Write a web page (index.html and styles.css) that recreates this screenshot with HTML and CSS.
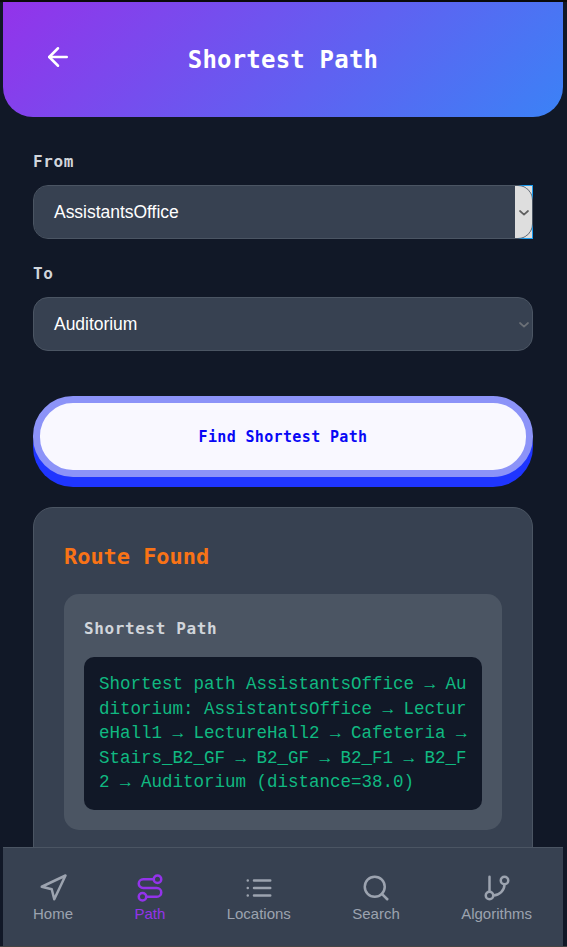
FILE: index.html
```html
<!DOCTYPE html>
<html lang="en">
<head>
<meta charset="utf-8">
<title>Shortest Path</title>
<link rel="stylesheet" href="styles.css">
</head>
<body>
<div class="app">
  <header class="header">
    <svg class="back" viewBox="0 0 24 24"><path d="m12 19-7-7 7-7"/><path d="M19 12H5"/></svg>
    <h1>Shortest Path</h1>
    <span class="header-spacer"></span>
  </header>
  <main class="content">
    <label class="label">From</label>
    <div class="select active">
      <span>AssistantsOffice</span>
      <span class="drop"><svg viewBox="0 0 10 6"><path d="M1 1l4 3.6L9 1"/></svg></span>
    </div>
    <label class="label">To</label>
    <div class="select">
      <span>Auditorium</span>
      <span class="drop"><svg viewBox="0 0 10 6"><path d="M1 1l4 3.6L9 1"/></svg></span>
    </div>
    <button class="find">Find Shortest Path</button>
    <section class="card">
      <h2>Route Found</h2>
      <div class="result">
        <h3>Shortest Path</h3>
        <div class="route">Shortest path AssistantsOffice → Auditorium: AssistantsOffice → LectureHall1 → LectureHall2 → Cafeteria → Stairs_B2_GF → B2_GF → B2_F1 → B2_F2 → Auditorium (distance=38.0)</div>
      </div>
    </section>
  </main>
  <nav class="nav">
    <a class="tab"><svg viewBox="0 0 24 24"><polygon points="3 11 22 2 13 21 11 13 3 11"/></svg>Home</a>
    <a class="tab current"><svg viewBox="0 0 24 24"><circle cx="6" cy="19" r="3"/><path d="M9 19h8.5a3.5 3.5 0 0 0 0-7h-11a3.5 3.5 0 0 1 0-7H15"/><circle cx="18" cy="5" r="3"/></svg>Path</a>
    <a class="tab"><svg viewBox="0 0 24 24"><path d="M8 6h13M8 12h13M8 18h13M3 6h.01M3 12h.01M3 18h.01"/></svg>Locations</a>
    <a class="tab"><svg viewBox="0 0 24 24"><circle cx="11" cy="11" r="8"/><path d="m21 21-4.3-4.3"/></svg>Search</a>
    <a class="tab"><svg viewBox="0 0 24 24"><path d="M6 3v12"/><circle cx="18" cy="6" r="3"/><circle cx="6" cy="18" r="3"/><path d="M18 9a9 9 0 0 1-9 9"/></svg>Algorithms</a>
  </nav>
</div>
</body>
</html>
```
FILE: styles.css
```css
*, *::after { box-sizing: border-box; }
body {
  margin: 0;
  height: 947px;
  overflow: hidden;
  background: #111827;
  border-top: 2px solid #0a0a0a;
  border-bottom: 1px solid #444444;
  font-family: "Liberation Sans", Arial, sans-serif;
}
svg { display: block; fill: none; stroke: currentColor; stroke-width: 2; stroke-linecap: round; stroke-linejoin: round; }
h1, h2, h3, .label, .find { font-family: "DejaVu Sans Mono", monospace; font-weight: 700; margin: 0; }
.app { width: 560px; height: 944px; margin-left: 3px; display: flex; flex-direction: column; }
.header {
  flex: none;
  height: 115px;
  padding: 0 40px;
  display: flex;
  align-items: center;
  justify-content: space-between;
  border-radius: 0 0 30px 30px;
  background: linear-gradient(135deg, #9333ea, #3b82f6);
  color: #fff;
}
.back { width: 30px; height: 30px; margin-bottom: 5px; }
.header-spacer { width: 30px; }
h1 { font-size: 24px; line-height: 30px; letter-spacing: 0.2px; }
.content { flex: 1; min-height: 0; overflow: hidden; padding: 34px 30px 0; }
.label { display: block; font-size: 16px; line-height: 22px; letter-spacing: 0.65px; color: #d1d5db; margin-bottom: 12px; }
.select {
  height: 54px;
  margin-bottom: 24px;
  padding-left: 20px;
  display: flex;
  align-items: center;
  justify-content: space-between;
  border: 1px solid #4b5563;
  border-radius: 15px;
  background: #374151;
  color: #fff;
  font-size: 17.5px;
  letter-spacing: -0.03px;
}
.drop { width: 17px; height: 52px; display: flex; align-items: center; justify-content: center; color: #6b7077; }
.drop svg { width: 10px; height: 6px; margin-top: 1px; stroke-width: 1.7; }
.active { background: linear-gradient(#374151, #374151) padding-box; position: relative; }
.active .drop { background: #dedede; color: #606060; border-radius: 0 14px 14px 0; }
.active::after {
  content: "";
  position: absolute;
  z-index: -1;
  top: -1px;
  right: -1px;
  width: 18px;
  height: 54px;
  background: #dedede;
  border: 1px solid #1b9cf0;
  border-left: 0;
}
.find {
  display: block;
  width: 100%;
  height: 81px;
  margin: 45px 0 30px;
  padding: 0;
  border: 7px solid #8c93f8;
  border-radius: 40px;
  background: #f9f8ff;
  box-shadow: 0 10px 0 #1f35ff;
  color: #0808f5;
  font-size: 15px;
  letter-spacing: 0.35px;
}
.card { height: 400px; padding: 30px; border: 1px solid #4b5563; border-radius: 20px; background: #374151; }
h2 { font-size: 22px; line-height: 36px; letter-spacing: -0.05px; color: #f97316; padding-top: 1px; margin-bottom: 19px; }
.result { width: 438px; height: 236px; padding: 21px 20px 20px; border-radius: 15px; background: #4b5563; }
h3 { font-size: 16px; line-height: 28px; letter-spacing: 0.62px; color: #d1d5db; margin-bottom: 14px; }
.route {
  padding: 15px;
  border-radius: 10px;
  background: #111827;
  color: #10b981;
  font: 17.5px/24.5px "Liberation Mono", monospace;
  word-break: break-all;
}
.nav {
  flex: none;
  height: 99px;
  padding: 25px 31px 0 30px;
  display: flex;
  align-items: flex-start;
  justify-content: space-between;
  border-top: 1px solid #4b5563;
  background: #374151;
}
.tab { display: flex; flex-direction: column; align-items: center; gap: 2px; color: #9ca3af; font-size: 15px; line-height: 17px; }
.tab svg { width: 30px; height: 30px; }
.current { color: #9333ea; }
```
